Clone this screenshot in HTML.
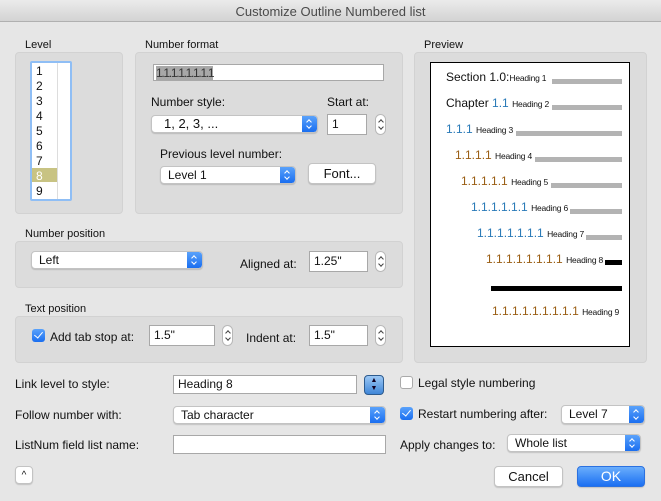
<!DOCTYPE html>
<html><head><meta charset="utf-8"><style>
*{margin:0;padding:0;box-sizing:border-box}
body{width:661px;height:501px;background:#e6e6e6;font-family:"Liberation Sans",sans-serif;font-size:12px;color:#111;position:relative;overflow:hidden}
.a{position:absolute}
.t{position:absolute;line-height:14px;white-space:nowrap}
.panel{position:absolute;background:#dcdcdc;border:1px solid #d2d2d2;border-radius:4px}
.field{position:absolute;background:#fff;border:1px solid #a8a8a8;line-height:16px;padding-left:4px;font-size:12px}
.sel{position:absolute;background:#fff;border:1px solid #c3c3c3;border-radius:4px;box-shadow:0 1px 1px rgba(0,0,0,.15);padding-left:7px;font-size:12px;overflow:hidden}
.sel .ar{position:absolute;right:0;top:0;bottom:0;width:15px;background:linear-gradient(#5aa2fb,#1a6ef0);border-radius:0 3px 3px 0}
.sel .ar:before{content:"";position:absolute;left:5px;top:4px;width:3px;height:3px;border-left:1.3px solid #fff;border-top:1.3px solid #fff;transform:rotate(45deg)}
.sel .ar:after{content:"";position:absolute;left:5px;bottom:4px;width:3px;height:3px;border-right:1.3px solid #fff;border-bottom:1.3px solid #fff;transform:rotate(45deg)}
.step{position:absolute;width:11px;height:21px;background:#fff;border:1px solid #b8b8b8;border-radius:6px}
.step:before{content:"";position:absolute;left:3px;top:5px;width:3px;height:3px;border-left:1px solid #444;border-top:1px solid #444;transform:rotate(45deg)}
.step:after{content:"";position:absolute;left:3px;bottom:5px;width:3px;height:3px;border-right:1px solid #444;border-bottom:1px solid #444;transform:rotate(45deg)}
.btn{position:absolute;background:#fff;border:1px solid #c3c3c3;border-radius:4px;box-shadow:0 1px 1px rgba(0,0,0,.15);text-align:center;font-size:13px}
.cb{position:absolute;width:13px;height:13px;border-radius:3px}
.cb.on{background:linear-gradient(#5aa2fb,#1a6ef0)}
.cb.on:after{content:"";position:absolute;left:4px;top:1px;width:4px;height:7px;border-right:1.6px solid #fff;border-bottom:1.6px solid #fff;transform:rotate(40deg)}
.cb.off{background:#fff;border:1px solid #aaa}
.pv{position:absolute;white-space:nowrap;line-height:14px;z-index:2}
.pv b{font-weight:normal;font-size:12px}
.pv i{font-style:normal;font-size:8.5px;color:#111;letter-spacing:-0.2px}
.bl{color:#2a7ab8}.br{color:#9a5e14}
.bar{position:absolute;height:5px;background:#b3b3b3;z-index:1}
</style></head><body>
<div class="a" style="left:0;top:0;width:661px;height:22px;background:linear-gradient(#ebebeb,#d3d3d3);border-bottom:1px solid #b0b0b0"></div>
<div class="t" style="left:0;width:661px;top:5px;text-align:center;font-size:13px;color:#4a4a4a">Customize Outline Numbered list</div>

<div class="t" style="left:25px;top:38px;font-size:11px">Level</div>
<div class="panel" style="left:15px;top:52px;width:108px;height:162px"></div>
<div class="a" style="left:30px;top:61px;width:42px;height:140px;background:#fff;border:2px solid #8fbef5;border-radius:2px"></div>
<div class="a" style="left:57px;top:63px;width:1px;height:136px;background:#ddd"></div>
<div class="a" style="left:32px;top:168px;width:25px;height:14px;background:#c8c383"></div>
<div class="t" style="left:36px;top:64px;font-size:12px;line-height:15px">1<br>2<br>3<br>4<br>5<br>6<br>7<br><span style="color:#fff">8</span><br>9</div>

<div class="t" style="left:145px;top:38px;font-size:11px">Number format</div>
<div class="panel" style="left:135px;top:52px;width:268px;height:162px"></div>
<div class="field" style="left:153px;top:64px;width:231px;height:17px;padding-left:2px"><span style="background:#a8a8a8;font-size:12px;letter-spacing:-1.3px;color:#333">1.1.1.1.1.1.1.1</span></div>
<div class="t" style="left:151px;top:95px">Number style:</div>
<div class="sel" style="left:151px;top:115px;width:167px;height:18px;line-height:16px;font-size:13px;padding-left:12px">1, 2, 3, ...<div class="ar"></div></div>
<div class="t" style="left:327px;top:95px">Start at:</div>
<div class="field" style="left:327px;top:114px;width:40px;height:21px;line-height:19px">1</div>
<div class="step" style="left:375px;top:114px"></div>
<div class="t" style="left:160px;top:147px">Previous level number:</div>
<div class="sel" style="left:160px;top:166px;width:136px;height:18px;line-height:16px">Level 1<div class="ar"></div></div>
<div class="btn" style="left:308px;top:163px;width:68px;height:21px;line-height:19px">Font...</div>

<div class="t" style="left:424px;top:38px;font-size:11px">Preview</div>
<div class="panel" style="left:414px;top:52px;width:233px;height:311px"></div>
<div class="a" style="left:430px;top:62px;width:200px;height:285px;background:#fff;border:1px solid #000"></div>
<div class="pv" style="left:446px;top:70px"><b>Section 1.0:</b><i>Heading 1</i></div><div class="bar" style="left:552px;top:79px;width:70px"></div>
<div class="pv" style="left:446px;top:96px"><b>Chapter </b><b class="bl">1.1</b> <i>Heading 2</i></div><div class="bar" style="left:552px;top:105px;width:70px"></div>
<div class="pv" style="left:446px;top:122px"><b class="bl">1.1.1</b> <i>Heading 3</i></div><div class="bar" style="left:516px;top:131px;width:106px"></div>
<div class="pv" style="left:455px;top:148px"><b class="br">1.1.1.1</b> <i>Heading 4</i></div><div class="bar" style="left:535px;top:157px;width:87px"></div>
<div class="pv" style="left:461px;top:174px"><b class="br">1.1.1.1.1</b> <i>Heading 5</i></div><div class="bar" style="left:551px;top:183px;width:71px"></div>
<div class="pv" style="left:471px;top:200px"><b class="bl">1.1.1.1.1.1</b> <i>Heading 6</i></div><div class="bar" style="left:570px;top:209px;width:52px"></div>
<div class="pv" style="left:477px;top:226px"><b class="bl">1.1.1.1.1.1.1</b> <i>Heading 7</i></div><div class="bar" style="left:586px;top:235px;width:36px"></div>
<div class="pv" style="left:486px;top:252px"><b class="br">1.1.1.1.1.1.1.1</b> <i>Heading 8</i></div><div class="a" style="left:605px;top:260px;width:17px;height:5px;background:#000"></div>
<div class="a" style="left:491px;top:286px;width:131px;height:5px;background:#000"></div>
<div class="pv" style="left:492px;top:304px"><b class="br">1.1.1.1.1.1.1.1.1</b> <i>Heading 9</i></div>

<div class="t" style="left:25px;top:227px;font-size:11px">Number position</div>
<div class="panel" style="left:15px;top:241px;width:388px;height:47px"></div>
<div class="sel" style="left:31px;top:251px;width:172px;height:18px;line-height:16px">Left<div class="ar"></div></div>
<div class="t" style="left:240px;top:257px">Aligned at:</div>
<div class="field" style="left:309px;top:251px;width:59px;height:21px;line-height:19px">1.25"</div>
<div class="step" style="left:375px;top:251px"></div>

<div class="t" style="left:25px;top:302px;font-size:11px">Text position</div>
<div class="panel" style="left:15px;top:316px;width:388px;height:47px"></div>
<div class="cb on" style="left:32px;top:329px"></div>
<div class="t" style="left:50px;top:330px">Add tab stop at:</div>
<div class="field" style="left:149px;top:325px;width:66px;height:21px;line-height:19px">1.5"</div>
<div class="step" style="left:222px;top:325px"></div>
<div class="t" style="left:246px;top:331px">Indent at:</div>
<div class="field" style="left:309px;top:325px;width:59px;height:21px;line-height:19px">1.5"</div>
<div class="step" style="left:375px;top:325px"></div>

<div class="t" style="left:15px;top:377px">Link level to style:</div>
<div class="field" style="left:173px;top:375px;width:184px;height:19px;line-height:17px">Heading 8</div>
<div class="a" style="left:364px;top:375px;width:20px;height:20px;border-radius:4px;background:linear-gradient(#9cc8f5,#3f86d8);border:1px solid #2d5b8e;color:#102;font-size:7px;line-height:8px;text-align:center;padding-top:1px">▲<br>▼</div>
<div class="cb off" style="left:400px;top:376px"></div>
<div class="t" style="left:418px;top:376px">Legal style numbering</div>

<div class="t" style="left:15px;top:408px">Follow number with:</div>
<div class="sel" style="left:173px;top:406px;width:213px;height:18px;line-height:16px">Tab character<div class="ar"></div></div>
<div class="cb on" style="left:400px;top:407px"></div>
<div class="t" style="left:418px;top:407px">Restart numbering after:</div>
<div class="sel" style="left:561px;top:405px;width:84px;height:19px;line-height:17px">Level 7<div class="ar"></div></div>

<div class="t" style="left:15px;top:438px">ListNum field list name:</div>
<div class="field" style="left:173px;top:435px;width:213px;height:19px"></div>
<div class="t" style="left:400px;top:438px">Apply changes to:</div>
<div class="sel" style="left:507px;top:434px;width:134px;height:18px;line-height:16px">Whole list<div class="ar"></div></div>

<div class="btn" style="left:15px;top:466px;width:18px;height:18px;line-height:18px;font-size:10px">^</div>
<div class="btn" style="left:494px;top:466px;width:69px;height:21px;line-height:19px">Cancel</div>
<div class="btn" style="left:577px;top:466px;width:68px;height:21px;line-height:19px;background:linear-gradient(#6aaefc,#1b6ff2);border-color:#2b71e0;color:#fff;font-size:14px">OK</div>
</body></html>
